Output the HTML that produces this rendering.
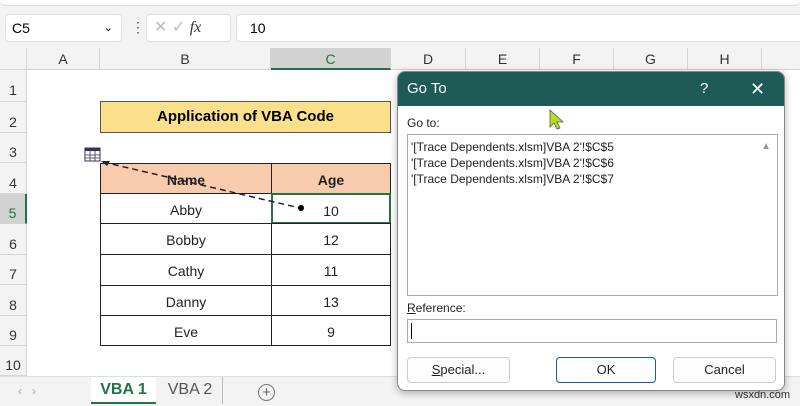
<!DOCTYPE html><html><head><style>
body{margin:0;width:800px;height:406px;overflow:hidden;background:#fff;font-family:"Liberation Sans",sans-serif;position:relative}
.a{position:absolute;box-sizing:border-box}
.ch{top:48px;height:22px;background:#f3f3f3;border-right:1px solid #d4d4d4;border-bottom:1px solid #d4d4d4;text-align:center;font-size:14px;line-height:22px;color:#333}
.rh{left:0;width:27px;background:#f3f3f3;border-bottom:1px solid #d4d4d4;border-right:1px solid #d4d4d4;text-align:center;font-size:14px;color:#333}
.cell{border:1px solid #222;text-align:center;font-size:14px;color:#222}
.btn{background:#fdfdfd;border:1px solid #ccc;border-radius:4px;text-align:center;font-size:13px;line-height:24px;color:#222}
</style></head><body>
<div class="a" style="left:0;top:0;width:800px;height:48px;background:#f3f3f3"></div>
<div class="a" style="left:0;top:0;width:800px;height:6px;background:#fff;border-bottom:1px solid #ddd;border-radius:0 0 6px 6px"></div>
<div class="a" style="left:5px;top:14px;width:117px;height:28px;background:#fff;border-radius:4px;border:1px solid #e0e0e0;font-size:14px;line-height:26px;padding-left:6px">C5<span style="position:absolute;right:8px;top:0;font-size:11px">&#8964;</span></div>
<div class="a" style="left:131px;top:19px;font-size:14px;color:#555">&#8942;</div>
<div class="a" style="left:146px;top:14px;width:85px;height:28px;background:#fff;border-radius:4px;border:1px solid #e0e0e0;font-size:16px;line-height:26px;color:#bbb;padding-left:7px">✕ ✓ <i style="color:#333;font-family:'Liberation Serif',serif">fx</i></div>
<div class="a" style="left:236px;top:14px;width:570px;height:28px;background:#fff;border-radius:4px;border:1px solid #e0e0e0;font-size:14px;line-height:26px;padding-left:13px">10</div>
<div class="a ch" style="left:0;width:27px"></div>
<div class="a ch" style="left:27px;width:73px">A</div>
<div class="a ch" style="left:100px;width:171px">B</div>
<div class="a ch" style="left:271px;width:120px;background:#d2d2d2;border-bottom:2px solid #217346;color:#217346">C</div>
<div class="a ch" style="left:391px;width:75px">D</div>
<div class="a ch" style="left:466px;width:74px">E</div>
<div class="a ch" style="left:540px;width:74px">F</div>
<div class="a ch" style="left:614px;width:74px">G</div>
<div class="a ch" style="left:688px;width:74px">H</div>
<div class="a ch" style="left:762px;width:40px"></div>
<div class="a rh" style="top:70px;height:32px;line-height:40px">1</div>
<div class="a rh" style="top:102px;height:31px;line-height:40px">2</div>
<div class="a rh" style="top:133px;height:30px;line-height:38px">3</div>
<div class="a rh" style="top:163px;height:31px;line-height:40px">4</div>
<div class="a rh" style="top:194px;height:30px;line-height:38px;background:#d2d2d2;color:#217346;border-right:2px solid #217346">5</div>
<div class="a rh" style="top:224px;height:31px;line-height:40px">6</div>
<div class="a rh" style="top:255px;height:30px;line-height:38px">7</div>
<div class="a rh" style="top:285px;height:31px;line-height:40px">8</div>
<div class="a rh" style="top:316px;height:30px;line-height:38px">9</div>
<div class="a rh" style="top:346px;height:30px;line-height:38px">10</div>
<div class="a" style="left:100px;top:101px;width:291px;height:32px;background:#fbe08c;border:1px solid #555;text-align:center;font-weight:bold;font-size:15px;line-height:30px">Application of VBA Code</div>
<div class="a cell" style="left:100px;top:163px;width:172px;height:31px;background:#f8cbad;font-weight:bold;line-height:32px">Name</div>
<div class="a cell" style="left:271px;top:163px;width:120px;height:31px;background:#f8cbad;font-weight:bold;line-height:32px">Age</div>
<div class="a cell" style="left:100px;top:193px;width:172px;height:31px;line-height:32px">Abby</div>
<div class="a cell" style="left:271px;top:193px;width:120px;height:31px;line-height:32px;border:2px solid #217346">10</div>
<div class="a cell" style="left:100px;top:223px;width:172px;height:32px;line-height:32px">Bobby</div>
<div class="a cell" style="left:271px;top:223px;width:120px;height:32px;line-height:32px">12</div>
<div class="a cell" style="left:100px;top:254px;width:172px;height:32px;line-height:32px">Cathy</div>
<div class="a cell" style="left:271px;top:254px;width:120px;height:32px;line-height:32px">11</div>
<div class="a cell" style="left:100px;top:285px;width:172px;height:31px;line-height:32px">Danny</div>
<div class="a cell" style="left:271px;top:285px;width:120px;height:31px;line-height:32px">13</div>
<div class="a cell" style="left:100px;top:315px;width:172px;height:31px;line-height:32px">Eve</div>
<div class="a cell" style="left:271px;top:315px;width:120px;height:31px;line-height:32px">9</div>
<svg class="a" style="left:0;top:0" width="800" height="406">
<rect x="85" y="148" width="15" height="13" fill="#fff" stroke="#335" stroke-width="1"/><rect x="85" y="148" width="15" height="3" fill="#335"/>
<path d="M90 151v10M95 151v10M85 155h15M85 158h15" stroke="#335" stroke-width="0.8"/>
<path d="M103 162L300 208" stroke="#222" stroke-width="1.5" stroke-dasharray="6 4"/>
<path d="M101 161l9 0-3 5z" fill="#222"/><circle cx="301" cy="208" r="3" fill="#000"/>
</svg>
<div class="a" style="left:0;top:376px;width:800px;height:30px;background:#f3f3f3;border-top:1px solid #ddd;font-size:12px;color:#aaa"><span style="position:absolute;left:18px;top:7px">‹ &nbsp; ›</span></div>
<div class="a" style="left:91px;top:377px;width:65px;height:27px;background:#fff;border-bottom:2px solid #217346;color:#217346;font-weight:bold;font-size:16px;text-align:center;line-height:26px">VBA 1</div>
<div class="a" style="left:158px;top:377px;width:65px;height:27px;color:#555;font-size:16px;text-align:center;line-height:26px;border-right:1px solid #bbb">VBA 2</div>
<div class="a" style="left:258px;top:384px;width:17px;height:17px;border:1px solid #777;border-radius:50%;text-align:center;line-height:15px;font-size:15px;color:#666">+</div>
<div class="a" style="left:735px;top:389px;font-size:11px;color:#333">wsxdn.com</div>
<div class="a" style="left:397px;top:71px;width:388px;height:320px;background:#fff;border:1px solid #888;border-radius:8px;overflow:hidden;box-shadow:0 2px 8px rgba(0,0,0,.3)">
<div class="a" style="left:0;top:0;width:388px;height:34px;background:#1e5b57;color:#fff;font-size:15px;line-height:34px;padding-left:9px">Go To<span style="position:absolute;left:302px">?</span><span style="position:absolute;left:352px;font-size:18px">✕</span></div>
<div class="a" style="left:9px;top:44px;font-size:12px;color:#222">Go to:</div>
<div class="a" style="left:9px;top:62px;width:371px;height:162px;border:1px solid #aaa;font-size:12px;line-height:16px;color:#222;padding:4px 3px">'[Trace Dependents.xlsm]VBA 2'!$C$5<br>'[Trace Dependents.xlsm]VBA 2'!$C$6<br>'[Trace Dependents.xlsm]VBA 2'!$C$7<span style="position:absolute;right:6px;top:4px;font-size:10px;color:#999">▲</span></div>
<div class="a" style="left:9px;top:229px;font-size:12px;color:#222"><u>R</u>eference:</div>
<div class="a" style="left:9px;top:247px;width:370px;height:24px;border:1px solid #aaa;padding:3px 3px"><div style="width:1px;height:16px;background:#000"></div></div>
<div class="a btn" style="left:9px;top:285px;width:103px;height:26px"><u>S</u>pecial...</div>
<div class="a btn" style="left:158px;top:285px;width:100px;height:26px;border:1px solid #1e5b8a">OK</div>
<div class="a btn" style="left:275px;top:285px;width:103px;height:26px">Cancel</div>
</div>
<svg class="a" style="left:549px;top:109px" width="16" height="22"><path d="M1 1v17l4-4 3 6 3-1-3-6h6z" fill="#b6e01a" stroke="#556" stroke-width="0.8"/></svg>
</body></html>
